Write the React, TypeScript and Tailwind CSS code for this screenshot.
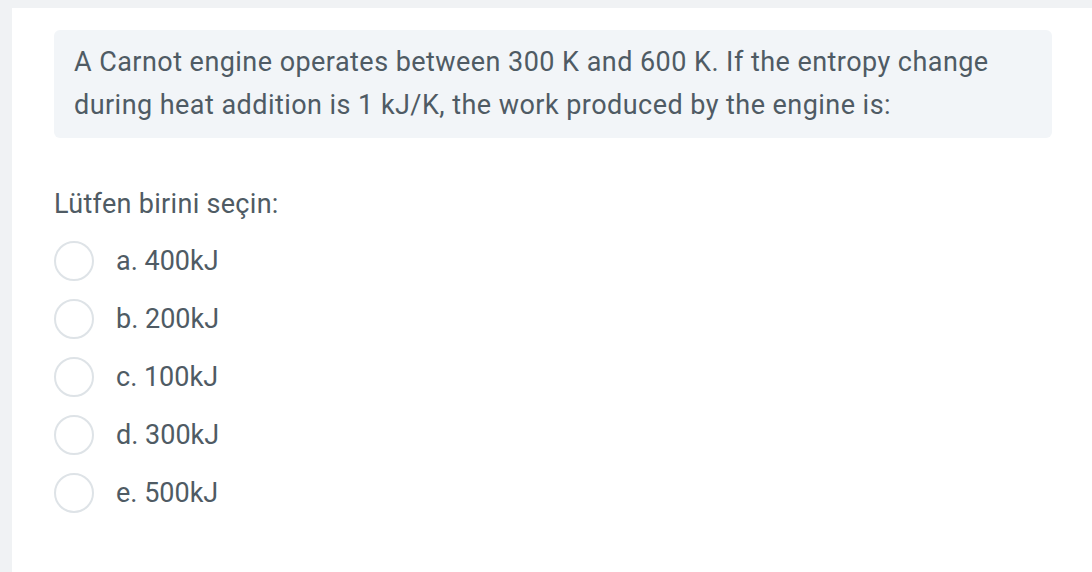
const options = ["a. 400kJ", "b. 200kJ", "c. 100kJ", "d. 300kJ", "e. 500kJ"]

export default function App() {
  return (
    <div
      className="min-h-[572px] bg-[#f0f2f4] pl-3 pt-2 text-[#4f5b64]"
      style={{ fontFamily: "Roboto, 'Noto Sans', sans-serif" }}
    >
      <div className="min-h-[564px] bg-white pl-[42px] pr-10 pt-[22px]">
        <div className="rounded-md bg-[#f2f5f8] px-5 pt-[11px] pb-[11px] text-[27px] leading-[43px] tracking-[0.45px]">
          A Carnot engine operates between 300 K and 600 K. If the entropy change during heat addition is 1 kJ/K,
          the work produced by the engine is:
        </div>

        <div className="mt-[45px] text-[27px] leading-[43px] tracking-[0.3px]">Lütfen birini seçin:</div>

        <div className="mt-[15px] flex flex-col gap-[18px]">
          {options.map((opt) => (
            <label key={opt} className="flex items-center gap-[22px]">
              <span className="h-10 w-10 rounded-full border-2 border-[#dee3e7] bg-white" />
              <span className="text-[27px] leading-10">{opt}</span>
            </label>
          ))}
        </div>
      </div>
    </div>
  )
}
